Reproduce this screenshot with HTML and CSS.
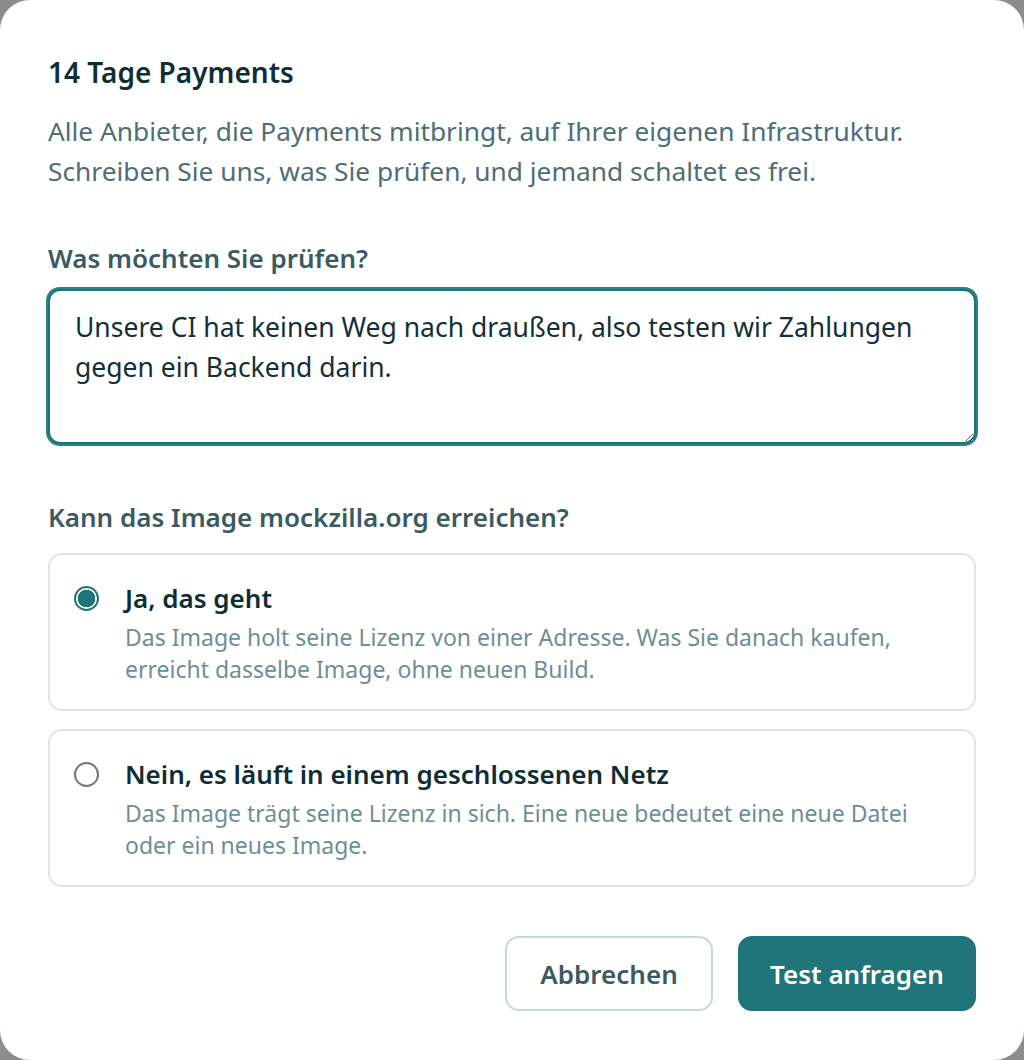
FILE: index.html
```html
<!DOCTYPE html>
<html lang="de">
<head>
<meta charset="utf-8">
<title>14 Tage Payments</title>
<link rel="stylesheet" href="styles.css">
</head>
<body>
<div class="dialog">
  <h1 class="title">14 Tage Payments</h1>
  <p class="intro">Alle Anbieter, die Payments mitbringt, auf Ihrer eigenen Infrastruktur.<br>Schreiben Sie uns, was Sie prüfen, und jemand schaltet es frei.</p>

  <label class="label label-msg" for="msg">Was möchten Sie prüfen?</label>
  <textarea id="msg" class="field">Unsere CI hat keinen Weg nach draußen, also testen wir Zahlungen gegen ein Backend darin.</textarea>

  <div class="label label-q">Kann das Image mockzilla.org erreichen?</div>
  <div class="options">
    <div class="option">
      <span class="radio checked"></span>
      <div class="option-text">
        <div class="option-title">Ja, das geht</div>
        <div class="option-desc">Das Image holt seine Lizenz von einer Adresse. Was Sie danach kaufen,<br>erreicht dasselbe Image, ohne neuen Build.</div>
      </div>
    </div>
    <div class="option">
      <span class="radio"></span>
      <div class="option-text">
        <div class="option-title">Nein, es läuft in einem geschlossenen Netz</div>
        <div class="option-desc">Das Image trägt seine Lizenz in sich. Eine neue bedeutet eine neue Datei<br>oder ein neues Image.</div>
      </div>
    </div>
  </div>

  <div class="actions">
    <button class="btn btn-secondary">Abbrechen</button>
    <button class="btn btn-primary">Test anfragen</button>
  </div>
</div>
</body>
</html>
```
FILE: styles.css
```css
html, body {
  margin: 0;
  padding: 0;
}
body {
  background: #8c8c8c;
  font-family: "Noto Sans", "Open Sans", sans-serif;
}
.dialog {
  box-sizing: border-box;
  width: 1024px;
  height: 1060px;
  background: #ffffff;
  border-radius: 30px;
  padding: 52px 48px 0 48px;
  display: flex;
  flex-direction: column;
}
.title {
  margin: 0;
  font-size: 28px;
  line-height: 40px;
  font-weight: 600;
  color: #0f2d35;
}
.intro {
  margin: 19px 0 0 0;
  font-size: 26.3px;
  line-height: 40px;
  color: #4e6e76;
}
.label {
  display: block;
  font-size: 26px;
  line-height: 32px;
  font-weight: 600;
  color: #3b5a62;
}
.label-msg {
  margin-top: 51px;
}
.field {
  display: block;
  box-sizing: border-box;
  margin: 15px 0 0 0;
  width: 928px;
  height: 155px;
  padding: 16px 25px;
  border: 2px solid #1e767a;
  box-shadow: 0 0 0 2px #2b8185;
  border-radius: 12px;
  outline: none;
  font-family: inherit;
  font-size: 26.5px;
  line-height: 40px;
  color: #123039;
  background: #fff;
}
.label-q {
  margin-top: 57px;
}
.options {
  margin-top: 20px;
  display: flex;
  flex-direction: column;
  gap: 18px;
}
.option {
  box-sizing: border-box;
  height: 158px;
  border: 2px solid #dde6e4;
  border-radius: 14px;
  padding: 25px 24px;
  display: flex;
  align-items: flex-start;
  gap: 26px;
}
.radio {
  flex: none;
  box-sizing: border-box;
  width: 25px;
  height: 25px;
  margin-top: 6px;
  border-radius: 50%;
  border: 2px solid #767676;
  background: #fff;
}
.radio.checked {
  border-color: #1f7579;
  background: radial-gradient(circle, #1f7579 0 8.5px, #fff 9.1px);
}
.option-title {
  font-size: 26px;
  line-height: 36px;
  font-weight: 600;
  color: #0f2d35;
}
.option-desc {
  margin-top: 5px;
  font-size: 23px;
  line-height: 32px;
  color: #6f8e93;
}
.actions {
  margin-top: 49px;
  display: flex;
  justify-content: flex-end;
  gap: 25px;
}
.btn {
  box-sizing: border-box;
  height: 75px;
  border-radius: 14px;
  font-family: inherit;
  font-size: 26px;
  font-weight: 600;
  padding: 0;
  cursor: pointer;
}
.btn-secondary {
  width: 208px;
  background: #fff;
  border: 2px solid #c9d8d5;
  color: #3b5a62;
}
.btn-primary {
  width: 238px;
  background: #1f7579;
  border: 2px solid #1f7579;
  color: #ffffff;
}
```
